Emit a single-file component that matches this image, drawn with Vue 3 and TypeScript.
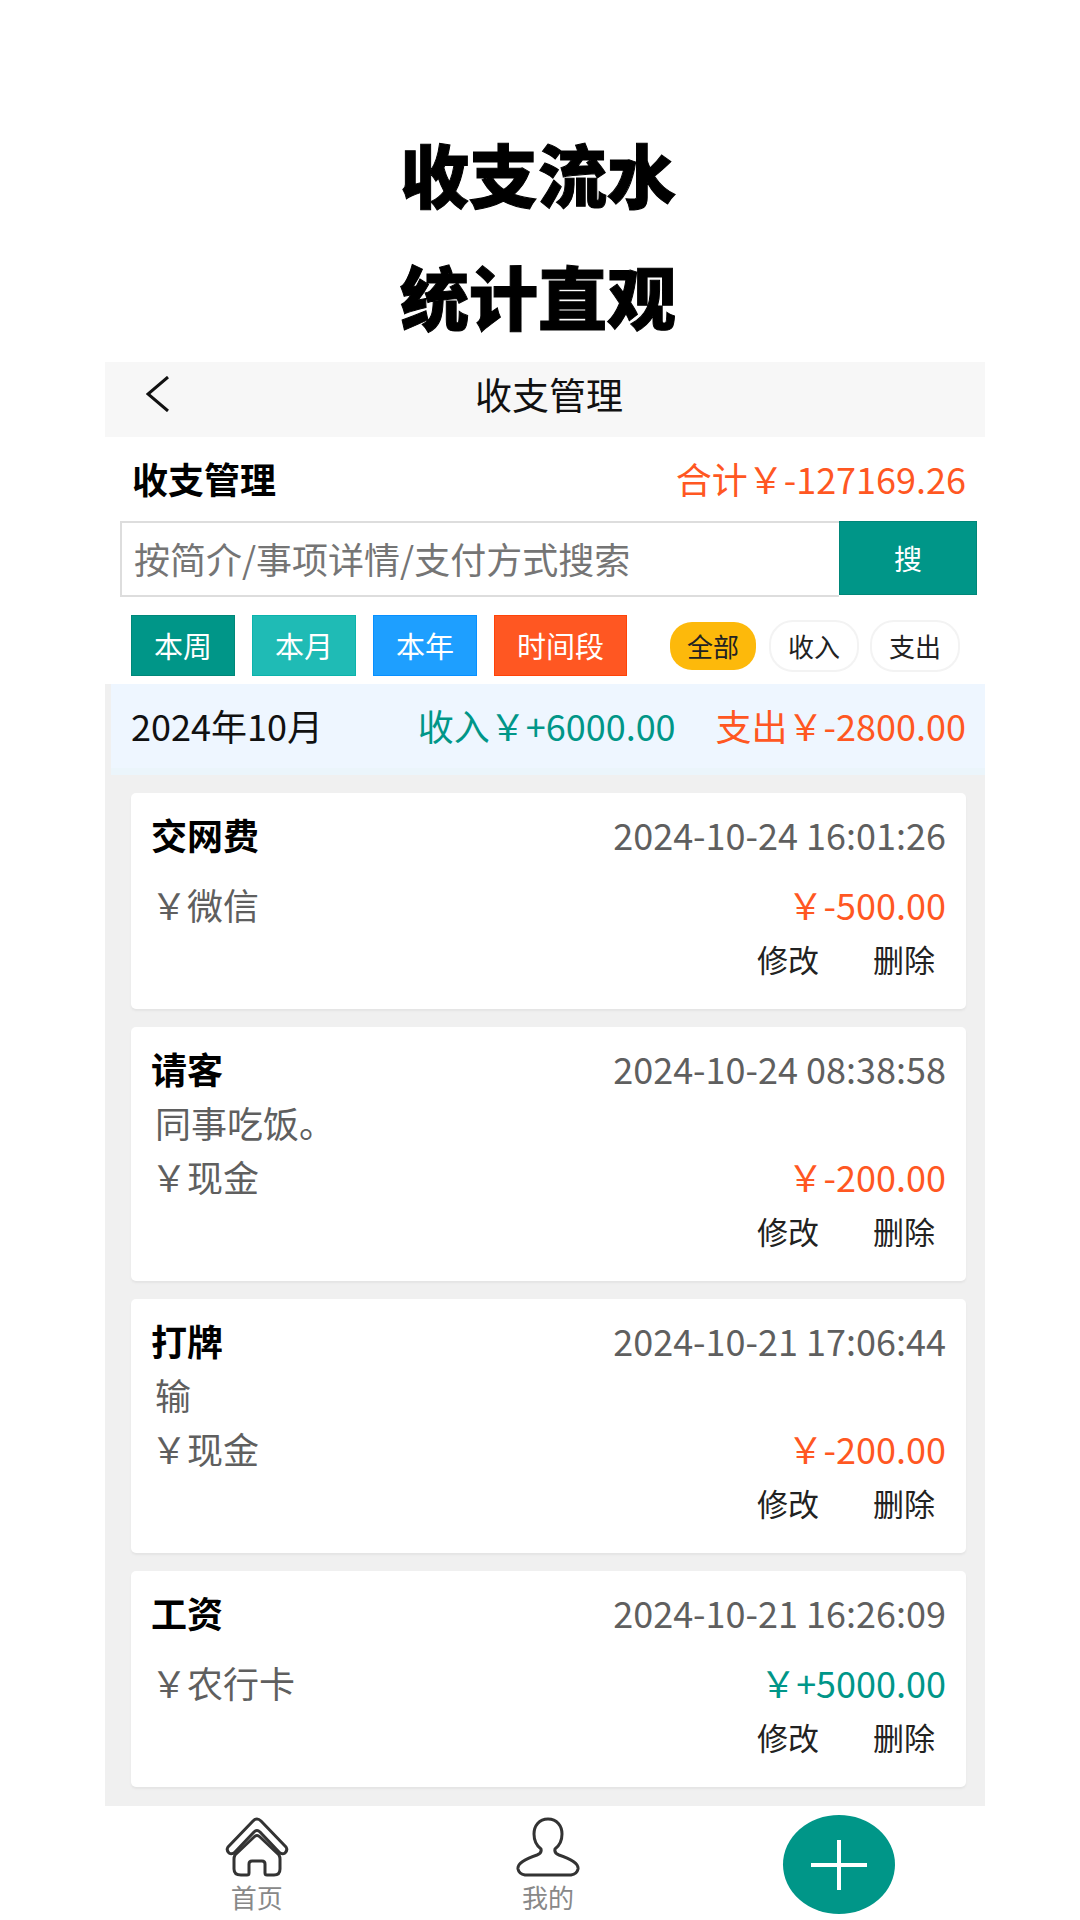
<script setup lang="ts">
import { ref } from 'vue'

interface Entry {
  title: string
  time: string
  note: string
  account: string
  amount: string
  income: boolean
}

const keyword = ref('')
const kind = ref('全部')
const kinds: string[] = ['全部', '收入', '支出']
const ranges = [
  { label: '本周', tone: 'green' },
  { label: '本月', tone: 'teal' },
  { label: '本年', tone: 'blue' },
  { label: '时间段', tone: 'orange' },
]
const entries: Entry[] = [
  { title: '交网费', time: '2024-10-24 16:01:26', note: '', account: '微信', amount: '-500.00', income: false },
  { title: '请客', time: '2024-10-24 08:38:58', note: '同事吃饭。', account: '现金', amount: '-200.00', income: false },
  { title: '打牌', time: '2024-10-21 17:06:44', note: '输', account: '现金', amount: '-200.00', income: false },
  { title: '工资', time: '2024-10-21 16:26:09', note: '', account: '农行卡', amount: '+5000.00', income: true },
]
</script>

<template>
  <div class="page">
    <h1 class="slogan">收支流水<br />统计直观</h1>
    <main class="phone">
      <header class="topbar">
        <button class="back" type="button" aria-label="返回">
          <svg width="24" height="36" viewBox="0 0 24 36"><path d="M22 1 L2 18 L22 35" fill="none" stroke="#111" stroke-width="3" /></svg>
        </button>
        <span class="topbar-title">收支管理</span>
      </header>

      <section class="total">
        <h2>收支管理</h2>
        <span class="expense">合计￥-127169.26</span>
      </section>

      <form class="search" @submit.prevent>
        <input v-model="keyword" type="text" aria-label="搜索" placeholder="按简介/事项详情/支付方式搜索" />
        <button type="submit">搜</button>
      </form>

      <section class="filters">
        <div class="ranges">
          <button v-for="r in ranges" :key="r.label" type="button" :class="r.tone">{{ r.label }}</button>
        </div>
        <div class="kinds">
          <button v-for="k in kinds" :key="k" type="button" :class="{ active: kind === k }" @click="kind = k">{{ k }}</button>
        </div>
      </section>

      <div class="ledger">
        <section class="month">
          <span class="month-name">2024年10月</span>
          <span class="income">收入￥+6000.00</span>
          <span class="expense">支出￥-2800.00</span>
        </section>

        <article v-for="e in entries" :key="e.time" class="card">
          <div class="row">
            <h3>{{ e.title }}</h3>
            <time>{{ e.time }}</time>
          </div>
          <p class="note">{{ e.note }}</p>
          <div class="row">
            <span class="account">￥{{ e.account }}</span>
            <span :class="e.income ? 'income' : 'expense'">￥{{ e.amount }}</span>
          </div>
          <div class="actions">
            <button type="button">修改</button>
            <button type="button">删除</button>
          </div>
        </article>
      </div>

      <nav class="tabs">
        <a href="#home">
          <svg width="64" height="60" viewBox="0 0 64 60" fill="none" stroke="#333" stroke-width="3" stroke-linejoin="round">
            <path d="M28 4 Q32 0 36 4 L61 30 Q63 33 60 36 Q57 38 54 35 L35 15 Q32 12 29 15 L10 35 Q7 38 4 36 Q1 33 3 30 Z" />
            <path d="M10 38 L29 20 Q32 17 35 20 L54 38 Q55 40 55 42 V52 Q55 58 49 58 H42 Q40 58 40 56 V47 Q40 44 37 44 H27 Q24 44 24 47 V56 Q24 58 22 58 H16 Q9 58 9 52 V42 Q9 40 10 38 Z" />
          </svg>
          <span>首页</span>
        </a>
        <a href="#me">
          <svg width="64" height="60" viewBox="0 0 64 60" fill="none" stroke="#333" stroke-width="3" stroke-linejoin="round">
            <path d="M32 2 C23 2 18 9 18 17 C18 25 21 29 25 32 Q26 36 21 38 C12 41 1 46 2 52 Q3 57 9 58 H55 Q61 57 62 52 C63 46 52 41 43 38 Q38 36 39 32 C43 29 46 25 46 17 C46 9 41 2 32 2 Z" />
          </svg>
          <span>我的</span>
        </a>
        <div class="add-slot">
          <button class="add" type="button" aria-label="新增">
            <svg width="56" height="50" viewBox="0 0 56 50"><path d="M0 25 H56 M28 0 V50" stroke="#fff" stroke-width="4" /></svg>
          </button>
        </div>
      </nav>
    </main>
  </div>
</template>

<style>
body {
  background: #fff;
}
</style>

<style scoped>
.page {
  font-family: "Noto Sans CJK SC", sans-serif;
  font-size: 36px;
  color: #111;
  padding: 112px 95px 0 105px;
}
.page button,
.page input {
  font-family: inherit;
  margin: 0;
  box-sizing: border-box;
}
h1, h2, h3, p {
  margin: 0;
}
.slogan {
  text-align: center;
  font-size: 69px;
  line-height: 122px;
  font-weight: 900;
  color: #000;
  margin-bottom: 6px;
  padding-right: 14px;
  -webkit-text-stroke: 1px #000;
}
.income {
  color: #009688;
}
.expense {
  color: #ff5722;
}
.topbar {
  display: grid;
  grid-template-columns: 1fr auto 1fr;
  align-items: center;
  height: 75px;
  padding: 0 0 12px 8px;
  box-sizing: border-box;
  background: #f7f7f7;
}
.page .back {
  justify-self: start;
  display: flex;
  margin-left: 33px;
  padding: 0;
  border: 0;
  background: none;
}
.topbar-title {
  grid-column: 2;
  font-size: 37px;
}
.total {
  display: flex;
  justify-content: space-between;
  align-items: center;
  height: 84px;
  padding: 0 19px 2px 27px;
  box-sizing: border-box;
}
.total h2 {
  font-size: 36px;
  font-weight: 700;
  color: #000;
}
.search {
  display: flex;
  margin: 0 8px 0 15px;
}
.search input {
  flex: 1;
  min-width: 0;
  height: 76px;
  padding: 0 12px 2px;
  border: 2px solid #ddd;
  border-right: 0;
  border-radius: 0;
  font-size: 36px;
  color: #333;
  outline: none;
}
.search input::placeholder {
  color: #757575;
}
.search button {
  width: 138px;
  height: 74px;
  border: 1px solid #008779;
  background: #009688;
  color: #fff;
  font-size: 28px;
}
.filters {
  display: flex;
  justify-content: space-between;
  align-items: center;
  padding: 18px 25px 8px 26px;
}
.ranges {
  display: flex;
  gap: 17px;
}
.ranges button {
  height: 61px;
  padding: 0 22px 2px;
  border: 1px solid;
  color: #fff;
  font-size: 29px;
}
.ranges .green {
  background: #009688;
  border-color: #008779;
}
.ranges .teal {
  background: #1fbbb5;
  border-color: #0cb3ac;
}
.ranges .blue {
  background: #1e9fff;
  border-color: #0890ff;
}
.ranges .orange {
  background: #ff5722;
  border-color: #ff4308;
}
.kinds {
  display: flex;
  gap: 11px;
}
.kinds button {
  height: 52px;
  padding: 0 17px;
  border: 2px solid #f3f3f3;
  border-radius: 24px;
  background: #fff;
  color: #222;
  font-size: 26px;
}
.kinds .active {
  background: #fdb90b;
  background-clip: padding-box;
  border-color: transparent;
}
.ledger {
  display: flex;
  flex-direction: column;
  gap: 18px;
  background: #f0f0f0;
  padding-bottom: 19px;
}
.month {
  display: flex;
  align-items: center;
  height: 91px;
  box-sizing: border-box;
  margin-left: 6px;
  padding: 0 19px 2px 20px;
  border-bottom: 7px solid #ebf5fb;
  background: #eef6ff;
}
.month-name {
  flex: 1;
}
.month .expense {
  margin-left: 40px;
}
.card {
  margin: 0 19px 0 26px;
  padding: 14px 20px 24px 20px;
  border-radius: 5px;
  background: #fff;
  box-shadow: 0 2px 2px #e4e4e4;
  line-height: 54px;
}
.row {
  display: flex;
  justify-content: space-between;
}
.card h3 {
  font-size: 36px;
  font-weight: 700;
  color: #000;
}
.card time,
.note,
.account {
  color: #5f5f5f;
}
.note {
  min-height: 16px;
  padding-left: 4px;
}
.actions {
  display: flex;
  justify-content: flex-end;
  gap: 54px;
  padding-right: 11px;
}
.actions button {
  height: 54px;
  padding: 0;
  border: 0;
  background: none;
  color: #222;
  font-size: 31px;
}
.tabs {
  display: flex;
  padding-left: 6px;
  background: #fff;
}
.tabs a,
.add-slot {
  flex: 1;
  display: flex;
  flex-direction: column;
  align-items: center;
}
.tabs a {
  padding-top: 11px;
  text-decoration: none;
  color: #888;
  font-size: 26px;
  line-height: 40px;
}
.add-slot {
  padding-top: 9px;
}
.add {
  display: flex;
  align-items: center;
  justify-content: center;
  width: 112px;
  height: 99px;
  padding: 0;
  border: 0;
  border-radius: 50%;
  background: #009688;
}
</style>
